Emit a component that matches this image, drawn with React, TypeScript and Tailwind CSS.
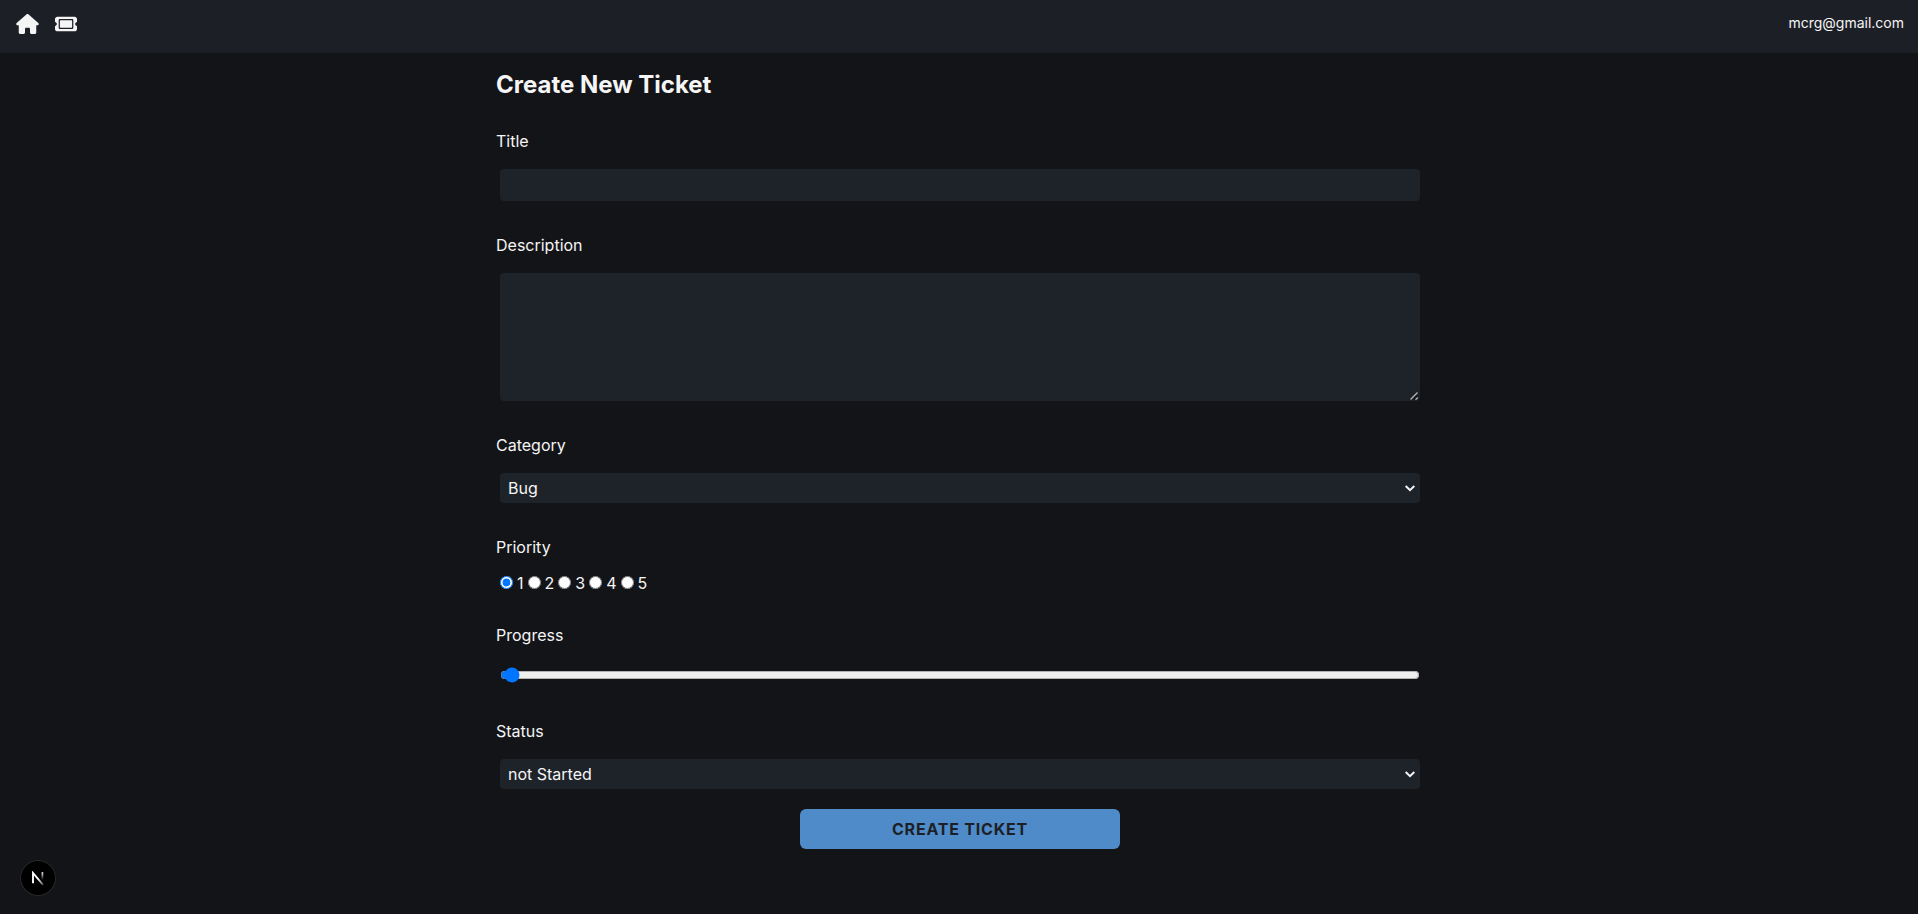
import type { ReactNode } from "react";
import { FaHouse, FaTicket } from "react-icons/fa6";

const field = "m-1 rounded bg-[#1e2229] p-1";
const labelStyle = "mt-4";

function Nav() {
  return (
    <nav className="flex h-[53px] items-start justify-between bg-[#1d1f27] pt-3.5 pr-3.5 pl-4">
      <div className="flex items-center gap-4">
        <a href="#home" aria-label="Home">
          <FaHouse className="h-5 w-[23px]" />
        </a>
        <a href="#ticket" aria-label="New ticket">
          <FaTicket className="h-5 w-[22px]" />
        </a>
      </div>
      <p className="text-sm leading-[18px]">mcrg@gmail.com</p>
    </nav>
  );
}

function Select({ id, options }: { id: string; options: string[] }): ReactNode {
  return (
    <div className="relative m-1 flex">
      <select id={id} className="h-[30px] w-full appearance-none rounded bg-[#1e2229] px-2">
        {options.map((option) => (
          <option key={option}>{option}</option>
        ))}
      </select>
      <svg
        className="pointer-events-none absolute top-3 right-1"
        width="12"
        height="8"
        viewBox="0 0 12 8"
        fill="none"
        stroke="currentColor"
        strokeWidth="2"
      >
        <path d="M1.7 1L6 5.2L10.3 1" />
      </svg>
    </div>
  );
}

function DevBadge() {
  return (
    <button
      type="button"
      aria-label="Developer tools"
      className="fixed bottom-[18px] left-5 flex size-9 items-center justify-center rounded-full bg-black inset-ring inset-ring-[#2b2b2b]"
    >
      <svg width="14" height="14" viewBox="0 0 14 14" fill="none">
        <defs>
          <linearGradient id="stem" x1="0" y1="1" x2="0" y2="9" gradientUnits="userSpaceOnUse">
            <stop stopColor="#fff" />
            <stop offset="1" stopColor="#fff" stopOpacity="0" />
          </linearGradient>
          <linearGradient id="slash" x1="7" y1="8" x2="12" y2="14" gradientUnits="userSpaceOnUse">
            <stop stopColor="#fff" />
            <stop offset="1" stopColor="#fff" stopOpacity="0.3" />
          </linearGradient>
        </defs>
        <path d="M2 12.2V2L12 13.8" stroke="url(#slash)" strokeWidth="1.9" />
        <path d="M11.4 1.2V9.6" stroke="url(#stem)" strokeWidth="1.7" />
      </svg>
    </button>
  );
}

export default function App() {
  return (
    <div className="flex min-h-screen flex-col bg-[#131418] font-['Inter',sans-serif] text-[#f5f5f5]">
      <Nav />
      <main className="flex grow justify-center pl-0.5">
        <form className="flex w-full max-w-[960px] flex-col gap-3 p-4">
          <h1 className="text-2xl font-bold">Create New Ticket</h1>

          <label htmlFor="title" className={labelStyle}>Title</label>
          <input id="title" type="text" className={field} />

          <label htmlFor="description" className={labelStyle}>Description</label>
          <div className="relative m-1 flex">
            <textarea
              id="description"
              rows={5}
              className="w-full rounded bg-[#1e2229] p-1 [&::-webkit-resizer]:bg-transparent"
            />
            <svg
              className="pointer-events-none absolute right-0.5 bottom-px"
              width="9"
              height="9"
              viewBox="0 0 9 9"
              fill="none"
            >
              <path d="M0.5 8L8.5 0V3L3 9H0.5Z" fill="#111216" />
              <path d="M1.5 8.5L8.5 1.5" stroke="#b5b5b5" strokeWidth="1.5" />
              <path d="M5 8.5L8.5 5" stroke="#111216" strokeWidth="1.5" />
              <path d="M6.5 8.8L8.8 6.5" stroke="#b5b5b5" strokeWidth="1.3" />
            </svg>
          </div>

          <label htmlFor="category" className={labelStyle}>Category</label>
          <Select id="category" options={["Bug", "Feature", "Project"]} />

          <span id="priority" className={labelStyle}>Priority</span>
          <div role="radiogroup" aria-labelledby="priority" className="flex h-6">
            {[1, 2, 3, 4, 5].map((n) => (
              <label key={n} className="flex items-start">
                <input type="radio" name="priority" value={n} defaultChecked={n === 1} className="mx-1 mt-[5px]" />
                {n}
              </label>
            ))}
          </div>

          <label htmlFor="progress" className={labelStyle}>Progress</label>
          <input id="progress" type="range" min={0} max={100} defaultValue={0} className={field} />

          <label htmlFor="status" className={labelStyle}>Status</label>
          <Select id="status" options={["not Started", "started", "done"]} />

          <button
            type="submit"
            className="m-1 h-10 w-full max-w-xs self-center rounded-md bg-[#4f8bc9] font-bold tracking-wider text-[#1d1f27] uppercase"
          >
            Create Ticket
          </button>
        </form>
      </main>
      <DevBadge />
    </div>
  );
}
